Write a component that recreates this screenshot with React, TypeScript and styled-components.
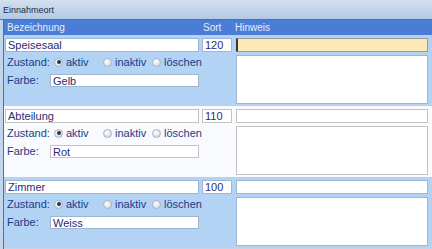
import React from 'react'
import styled, { createGlobalStyle } from 'styled-components'

const Global = createGlobalStyle`
  html, body {
    margin: 0;
    padding: 0;
    background: #c3d5ea;
    font-family: "Liberation Sans", Arial, sans-serif;
  }
`

const Window = styled.div`
  width: 432px;
  height: 249px;
  overflow: hidden;
  display: flex;
  flex-direction: column;
  background: #c3d5ea;
`

const TitleBar = styled.div`
  height: 19px;
  flex: none;
  padding-left: 3px;
  display: flex;
  align-items: center;
  font-size: 9px;
  color: #1c2a3c;
  background: linear-gradient(#d3e0ef, #b2c9e4);
  border-bottom: 1px solid #5d6f86;
`

const Frame = styled.div`
  flex: 1;
  margin-left: 3px;
  border-left: 1px solid #5d6f86;
  display: flex;
  flex-direction: column;
  min-height: 0;
`

const Header = styled.div`
  height: 15px;
  flex: none;
  display: grid;
  grid-template-columns: 194px 30px 193px;
  column-gap: 3px;
  align-items: center;
  padding-left: 1px;
  background: #4b7dd7;
  color: #e6eefa;
  font-size: 10px;
  span:nth-child(1) { padding-left: 2px; }
  span:nth-child(2) { padding-left: 1px; }
`

const Row = styled.div<{ $alt: boolean }>`
  flex: none;
  height: 71px;
  box-sizing: border-box;
  padding: 3px 3px 2px 1px;
  display: grid;
  grid-template-columns: 194px 30px 193px;
  grid-template-rows: 14px 1fr;
  column-gap: 3px;
  row-gap: 3px;
  background: ${(p) => (p.$alt ? '#f8fafd' : '#b3d3f4')};
  --field-border: ${(p) => (p.$alt ? '#c3c3c3' : '#9db6d2')};
`

const Field = styled.div<{ $focus?: boolean }>`
  box-sizing: border-box;
  height: 14px;
  background: ${(p) => (p.$focus ? '#fee8b5' : '#ffffff')};
  border: 1px solid ${(p) => (p.$focus ? '#9b9b9b' : 'var(--field-border)')};
  border-left: ${(p) => (p.$focus ? '2px solid #3a3a3a' : '1px solid var(--field-border)')};
  padding-left: 2px;
  font-size: 11px;
  line-height: 12px;
  color: #2d2c74;
  white-space: nowrap;
  overflow: hidden;
`

const NoteLine = styled(Field)`
  margin-left: 1px;
`

const Details = styled.div`
  grid-column: 1 / 3;
  display: flex;
  flex-direction: column;
  gap: 4px;
  padding-left: 2px;
`

const Line = styled.div`
  display: flex;
  align-items: center;
  height: 14px;
  font-size: 11px;
  color: #1d3a86;
  white-space: nowrap;
`

const Label = styled.span<{ $w: number }>`
  width: ${(p) => p.$w}px;
  flex: none;
`

const Option = styled.label`
  display: flex;
  flex: none;
  align-items: center;
  gap: 3px;
  width: 49px;
`

const Radio = styled.span<{ $on: boolean }>`
  flex: none;
  box-sizing: border-box;
  width: 9px;
  height: 9px;
  border-radius: 50%;
  border: 1px solid #a8b4c4;
  background: radial-gradient(circle at 40% 35%, #ffffff, #c9d1dc);
  position: relative;
  ${(p) =>
    p.$on &&
    `&::after {
      content: '';
      position: absolute;
      left: 1.5px; top: 1.5px;
      width: 4px; height: 4px;
      border-radius: 50%;
      background: #1f3b4a;
    }`}
`

const ColorField = styled(Field)`
  width: 149px;
  height: 13px;
  margin-left: 2px;
`

const Note = styled.div`
  box-sizing: border-box;
  grid-column: 3;
  margin-left: 1px;
  height: 49px;
  background: #ffffff;
  border: 1px solid var(--field-border);
`

const rows = [
  { name: 'Speisesaal', sort: 120, color: 'Gelb' },
  { name: 'Abteilung', sort: 110, color: 'Rot' },
  { name: 'Zimmer', sort: 100, color: 'Weiss' },
]

const states = ['aktiv', 'inaktiv', 'löschen']

export default function App() {
  return (
    <Window>
      <Global />
      <TitleBar>Einnahmeort</TitleBar>
      <Frame>
        <Header>
          <span>Bezeichnung</span>
          <span>Sort</span>
          <span>Hinweis</span>
        </Header>
        {rows.map((r, i) => (
          <Row key={r.name} $alt={i % 2 === 1}>
            <Field>{r.name}</Field>
            <Field>{r.sort}</Field>
            <NoteLine $focus={i === 0} />
            <Details>
              <Line>
                <Label $w={47}>Zustand:</Label>
                {states.map((s, k) => (
                  <Option key={s}>
                    <Radio $on={k === 0} />
                    {s}
                  </Option>
                ))}
              </Line>
              <Line>
                <Label $w={41}>Farbe:</Label>
                <ColorField>{r.color}</ColorField>
              </Line>
            </Details>
            <Note />
          </Row>
        ))}
      </Frame>
    </Window>
  )
}
